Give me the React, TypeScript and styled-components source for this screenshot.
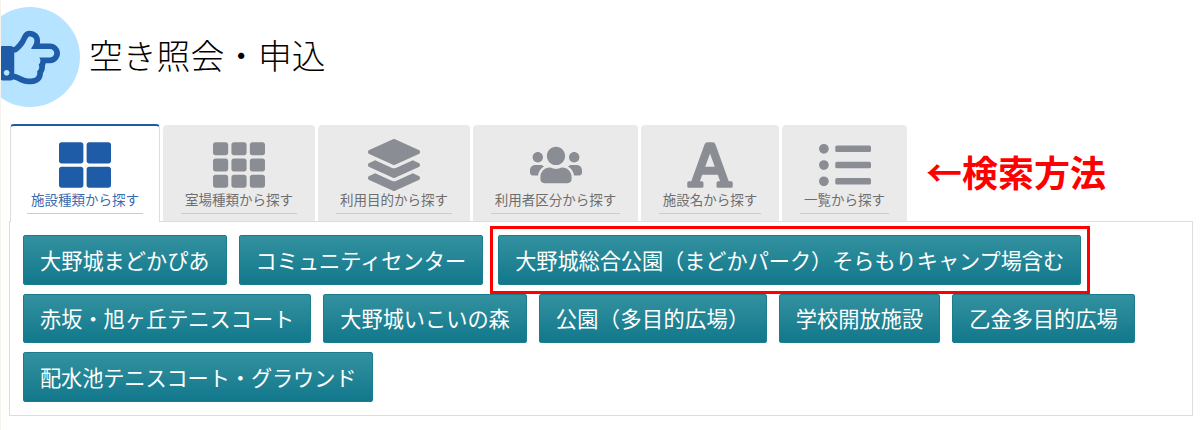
import React from 'react';
import styled, { createGlobalStyle } from 'styled-components';
import {
  FaThLarge,
  FaTh,
  FaLayerGroup,
  FaUsers,
  FaFont,
  FaListUl,
  FaRegHandPointRight,
} from 'react-icons/fa';

const GlobalStyle = createGlobalStyle`
  html, body {
    margin: 0;
    padding: 0;
    background: #fff;
  }
  body {
    font-family: "Noto Sans CJK JP", "Liberation Sans", sans-serif;
  }
`;

const Page = styled.div`
  width: 1200px;
  height: 430px;
  box-sizing: border-box;
  border-left: 1px solid #f6f2ec;
  overflow: hidden;
  background: #fff;
`;

const Header = styled.div`
  display: flex;
  align-items: center;
  height: 124px;
  box-sizing: border-box;
  padding-bottom: 10px;
`;

const Badge = styled.div`
  flex: none;
  width: 100px;
  height: 100px;
  margin-left: -21px;
  margin-right: 9px;
  padding-right: 20px;
  box-sizing: border-box;
  border-radius: 50%;
  background: #b6e3ff;
  color: #1f5ca8;
  display: flex;
  align-items: center;
  justify-content: flex-end;
  font-size: 61px;
`;

const Title = styled.h1`
  margin: -4px 0 0;
  font-size: 33.8px;
  font-weight: 300;
  color: #000;
  line-height: 1.2;
`;

const TabRow = styled.div`
  display: flex;
  gap: 3px;
  margin-left: 9px;
  height: 97px;
`;

const Tab = styled.div<{ $active?: boolean; $width: number }>`
  width: ${(p) => p.$width}px;
  box-sizing: border-box;
  display: flex;
  flex-direction: column;
  align-items: center;
  border-radius: 4px 4px 0 0;
  background: ${(p) => (p.$active ? '#fff' : '#eaeaea')};
  border: 1px solid ${(p) => (p.$active ? '#ddd' : '#eaeaea')};
  border-top: ${(p) => (p.$active ? '2px solid #1f5ca8' : '1px solid #eaeaea')};
  border-bottom: none;
  color: ${(p) => (p.$active ? '#1f5ca8' : '#8b8d94')};
  position: relative;
  z-index: ${(p) => (p.$active ? 1 : 0)};
  height: ${(p) => (p.$active ? 98 : 96)}px;
  margin-top: ${(p) => (p.$active ? 0 : 1)}px;
`;

const IconBox = styled.div`
  height: 60px;
  margin-top: 13px;
  display: flex;
  align-items: flex-start;
  justify-content: center;
  font-size: 52px;
  line-height: 0;
`;

const TabLabel = styled.div<{ $active?: boolean }>`
  font-size: 13.5px;
  line-height: 20px;
  padding: 0 4px 4px;
  margin-top: -10px;
  color: ${(p) => (p.$active ? '#3a6cb0' : '#6e6e6e')};
  border-bottom: 1px solid #ccc;
  white-space: nowrap;
`;

const Note = styled.div`
  align-self: center;
  margin: 0 0 3px 16px;
  font-size: 36px;
  font-weight: 700;
  color: #f00;
  white-space: nowrap;
`;

const Panel = styled.div`
  margin: 0 7px 0 8px;
  height: 195px;
  box-sizing: border-box;
  border: 1px solid #ddd;
  padding: 13px 13px 0;
  display: flex;
  flex-wrap: wrap;
  align-content: flex-start;
  column-gap: 12px;
  row-gap: 9px;
`;

const FacilityButton = styled.div<{ $marked?: boolean; $tracking?: number }>`
  position: relative;
  box-sizing: border-box;
  height: 49.5px;
  padding: 0 16px 1px;
  display: flex;
  align-items: center;
  font-size: 21.2px;
  letter-spacing: ${(p) => p.$tracking ?? 0}px;
  color: #fff;
  white-space: nowrap;
  border: 1px solid #1a7d8f;
  border-radius: 2px;
  background: linear-gradient(to bottom, #33919f, #12788c);

  ${(p) =>
    p.$marked &&
    `
    margin-left: 3px;

    &::after {
      content: '';
      position: absolute;
      inset: -10px -10px -10px -9px;
      border: 3px solid #f00;
    }
  `}
`;

const tabs = [
  { label: '施設種類から探す', width: 150, Icon: FaThLarge, active: true },
  { label: '室場種類から探す', width: 152, Icon: FaTh },
  { label: '利用目的から探す', width: 152, Icon: FaLayerGroup },
  { label: '利用者区分から探す', width: 165, Icon: FaUsers },
  { label: '施設名から探す', width: 138, Icon: FaFont },
  { label: '一覧から探す', width: 125, Icon: FaListUl },
];

const facilities = [
  { name: '大野城まどかぴあ' },
  { name: 'コミュニティセンター' },
  { name: '大野城総合公園（まどかパーク）そらもりキャンプ場含む', marked: true, tracking: -0.05 },
  { name: '赤坂・旭ヶ丘テニスコート' },
  { name: '大野城いこいの森' },
  { name: '公園（多目的広場）', tracking: 0.35 },
  { name: '学校開放施設', tracking: 0.1 },
  { name: '乙金多目的広場' },
  { name: '配水池テニスコート・グラウンド', tracking: -0.1 },
];

const App: React.FC = () => {
  return (
    <Page>
      <GlobalStyle />
      <Header>
        <Badge>
          <FaRegHandPointRight />
        </Badge>
        <Title>空き照会・申込</Title>
      </Header>
      <TabRow>
        {tabs.map(({ label, width, Icon, active }) => (
          <Tab key={label} $active={active} $width={width}>
            <IconBox>
              <Icon />
            </IconBox>
            <TabLabel $active={active}>{label}</TabLabel>
          </Tab>
        ))}
        <Note>←検索方法</Note>
      </TabRow>
      <Panel>
        {facilities.map(({ name, marked, tracking }) => (
          <FacilityButton key={name} $marked={marked} $tracking={tracking}>
            {name}
          </FacilityButton>
        ))}
      </Panel>
    </Page>
  );
};

export default App;
